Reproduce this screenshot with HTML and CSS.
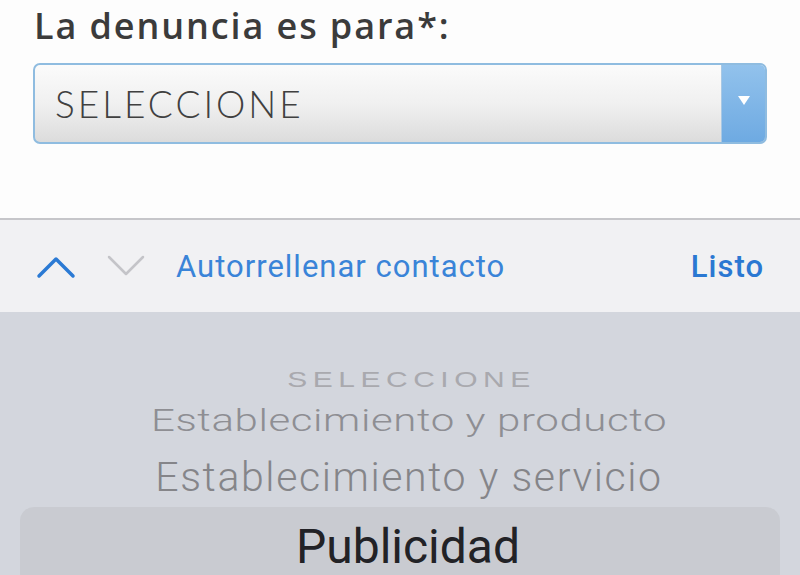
FILE: index.html
```html
<!DOCTYPE html>
<html lang="es">
<head>
    <meta charset="UTF-8">
    <meta name="viewport" content="width=device-width, initial-scale=1.0">
    <title>Denuncia</title>
    <link rel="stylesheet" href="styles.css">
</head>
<body>
    <div class="form-area">
        <label class="field-label">La denuncia es para*:</label>
        <div class="select-box">
            <span class="select-value">SELECCIONE</span>
            <span class="select-arrow"><span class="triangle"></span></span>
        </div>
    </div>

    <div class="toolbar">
        <div class="nav-arrows">
            <svg class="chev up" width="40" height="28" viewBox="0 0 40 28"><polyline points="3,24 20,7 37,24" /></svg>
            <svg class="chev down" width="40" height="28" viewBox="0 0 40 28"><polyline points="3,5 20,22 37,5" /></svg>
        </div>
        <span class="autofill">Autorrellenar contacto</span>
        <span class="done">Listo</span>
    </div>

    <div class="picker">
        <div class="opt opt-far">SELECCIONE</div>
        <div class="opt opt-mid">Establecimiento y producto</div>
        <div class="opt opt-near">Establecimiento y servicio</div>
        <div class="picker-selected">
            <div class="opt opt-current">Publicidad</div>
        </div>
    </div>
</body>
</html>
```

FILE: styles.css
```css
* { box-sizing: border-box; }
html, body { margin: 0; padding: 0; }
body { width: 800px; height: 575px; overflow: hidden; background-color: #fdfdfd; font-family: "Open Sans", sans-serif; }

.form-area {
    height: 218px;
    padding: 2px 33px 0 33px;
    background-color: #fdfdfd;
}
.field-label {
    display: block;
    font-size: 36px;
    font-weight: 600;
    color: #3b3b3b;
    line-height: 48px;
    letter-spacing: 1.9px;
    margin-left: 1px;
}
.select-box {
    display: flex;
    margin-top: 13px;
    height: 81px;
    border: 2px solid #8fbce0;
    border-radius: 7px;
    overflow: hidden;
    background: linear-gradient(#fbfbfb 0%, #f0f0f0 50%, #dcdcdc 100%);
}
.select-value {
    flex: 1;
    display: flex;
    align-items: center;
    padding-left: 20px;
    font-family: "Lato", sans-serif;
    font-weight: 300;
    font-size: 37px;
    color: #404040;
    letter-spacing: 3px;
}
.select-arrow {
    width: 44px;
    display: flex;
    align-items: center;
    justify-content: center;
    background: linear-gradient(#92c2ec, #6eaae2);
    border-left: 1px solid #a8c8e4;
}
.triangle {
    width: 0;
    height: 0;
    border-left: 6px solid transparent;
    border-right: 6px solid transparent;
    border-top: 9px solid #ffffff;
    margin-top: -6px;
}

.toolbar {
    display: flex;
    align-items: center;
    height: 94px;
    padding: 0 36px 0 36px;
    background-color: #f1f1f3;
    border-top: 2px solid #c6c6ca;
    font-family: "Roboto", sans-serif;
}
.nav-arrows { display: flex; gap: 30px; margin-right: 30px; }
.chev polyline { fill: none; stroke-width: 3.5; stroke-linecap: round; stroke-linejoin: round; }
.chev.up polyline { stroke: #2b7ad4; }
.chev.down polyline { stroke: #c4c4c8; stroke-width: 2.5; }
.autofill { flex: 1; font-size: 31px; color: #3a84d8; letter-spacing: 1px; }
.done { font-size: 31px; font-weight: 500; color: #2b78d2; letter-spacing: 1px; }

.picker {
    height: 263px;
    overflow: hidden;
    background-color: #d3d6dd;
    display: flex;
    flex-direction: column;
    align-items: center;
    padding-top: 53px;
    padding-left: 18px;
    font-family: "Roboto", sans-serif;
}
.opt { text-align: center; white-space: nowrap; flex-shrink: 0; }
.opt-far {
    font-family: "Liberation Sans", sans-serif;
    font-size: 30px;
    line-height: 30px;
    height: 30px;
    letter-spacing: 5.5px;
    margin-right: -5px;
    color: #a9a9ae;
    transform: scaleY(0.72);
}
.opt-mid {
    font-size: 42px;
    font-weight: 300;
    line-height: 50px;
    height: 57px;
    color: #8e8e93;
    letter-spacing: 0.6px;
    transform: scaleY(0.74);
}
.opt-near {
    font-size: 41px;
    font-weight: 300;
    line-height: 50px;
    height: 55px;
    color: #858589;
    letter-spacing: 1.6px;
}
.picker-selected {
    flex-shrink: 0;
    align-self: stretch;
    margin: 0 20px 0 2px;
    height: 80px;
    border-radius: 14px;
    background-color: #c9cbd1;
    padding-top: 12px;
}
.opt-current {
    font-size: 48px;
    line-height: 56px;
    color: #222226;
    padding-left: 16px;
}
```
